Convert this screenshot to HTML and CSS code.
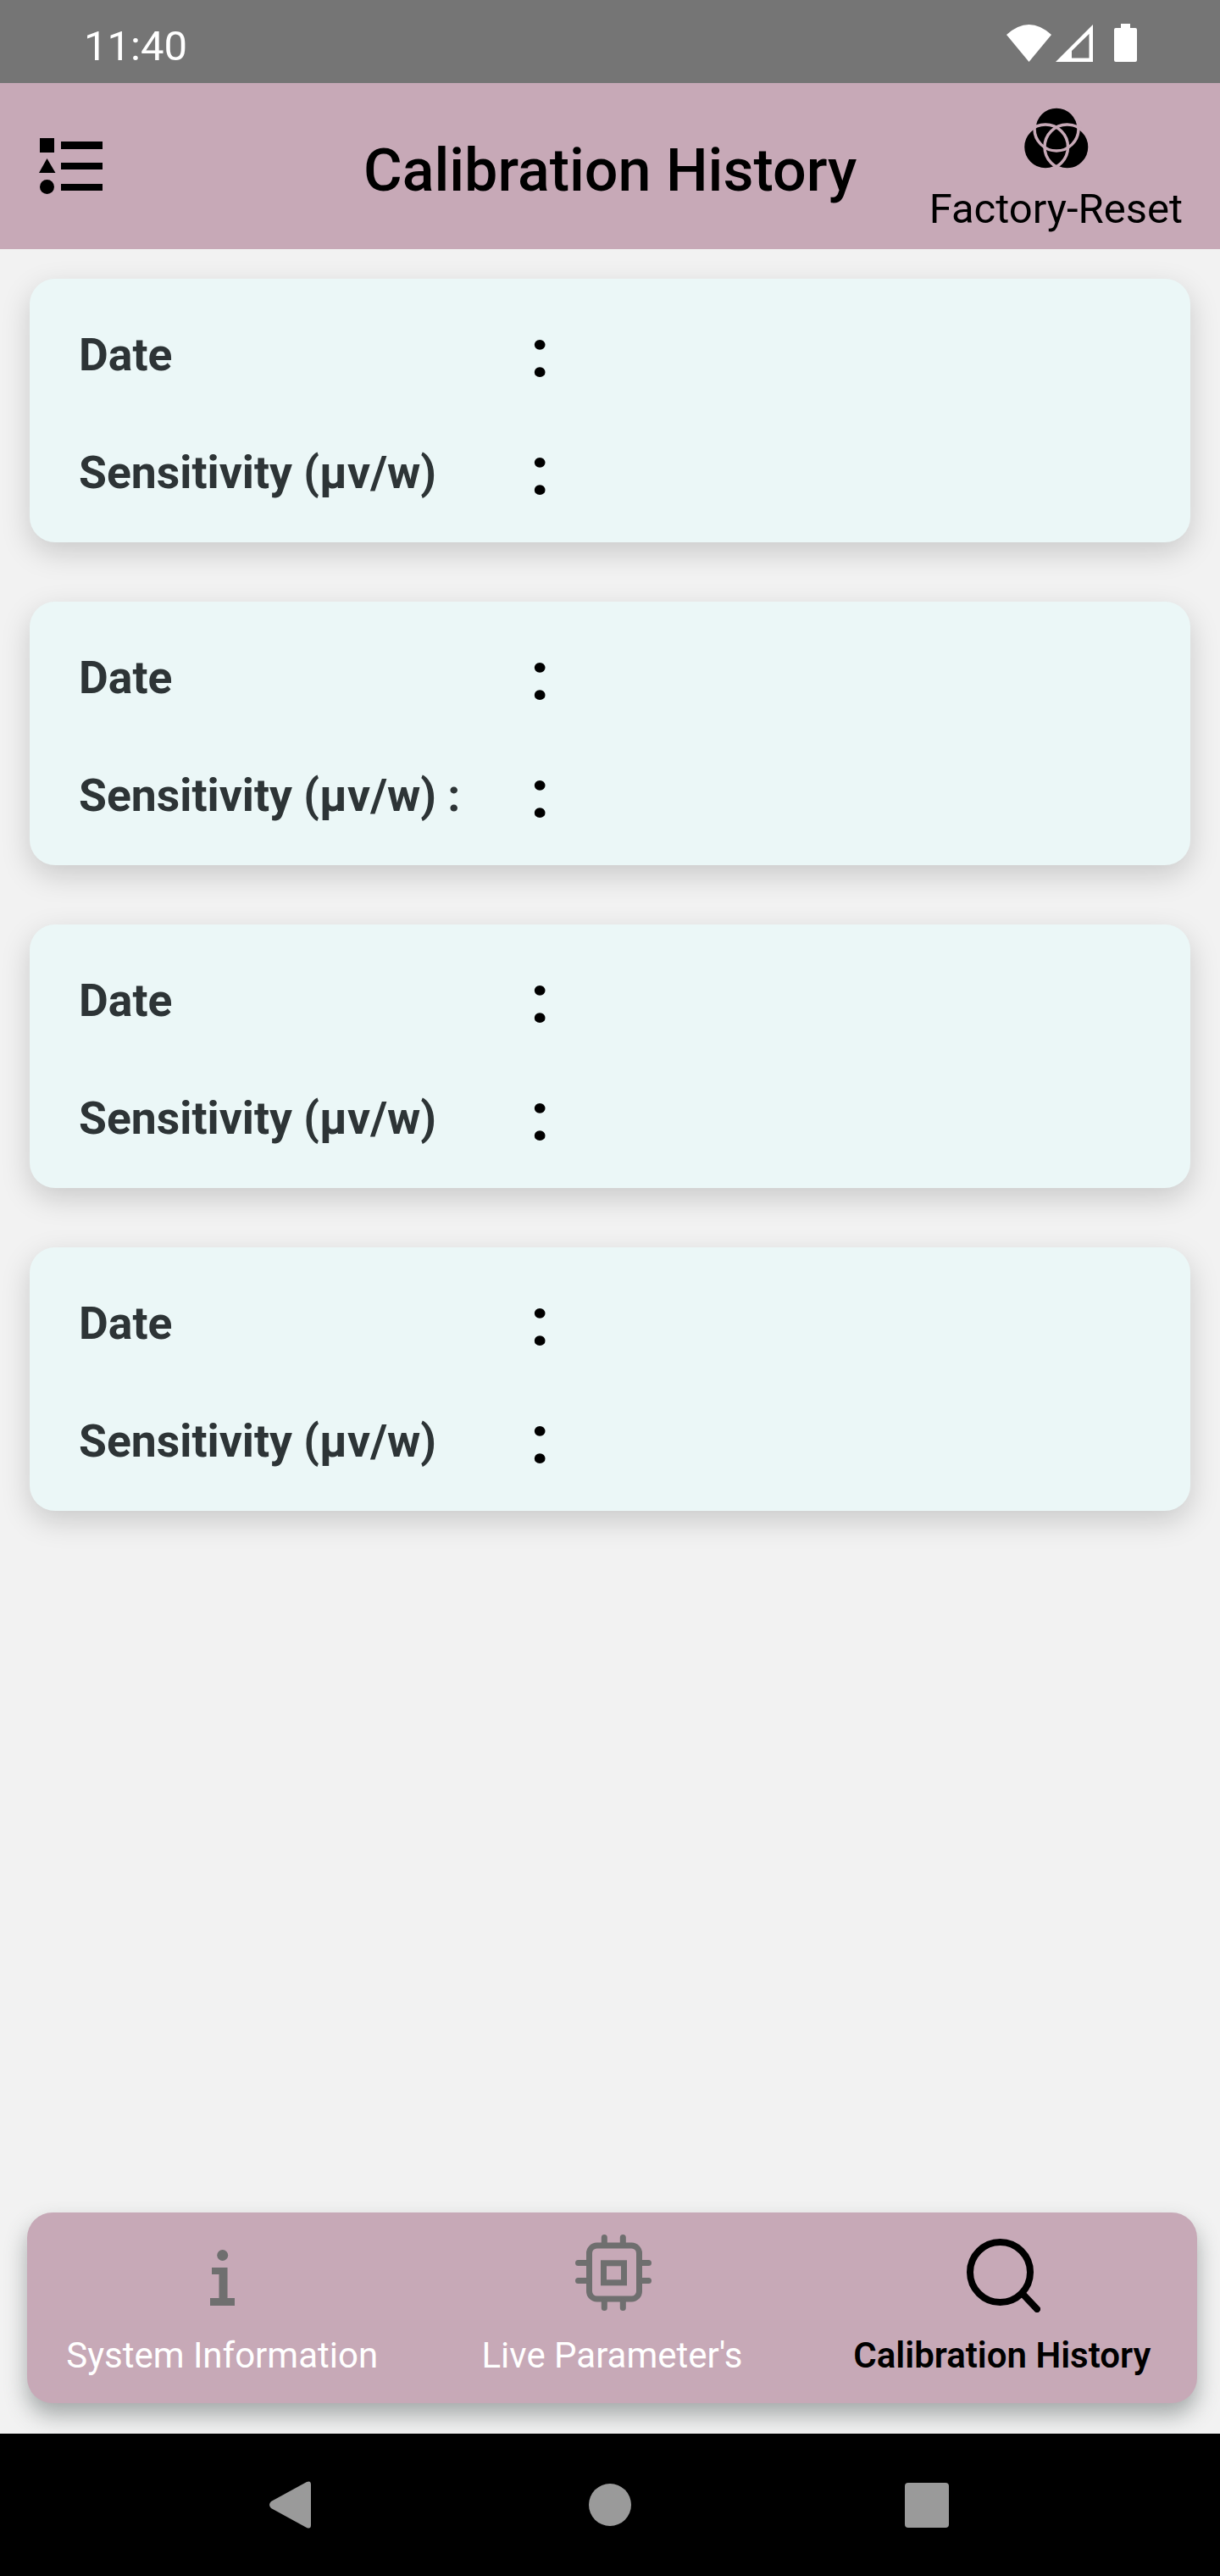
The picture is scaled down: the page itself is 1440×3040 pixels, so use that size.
FILE: index.html
```html
<!DOCTYPE html>
<html lang="en">
<head>
<meta charset="utf-8">
<title>Calibration History</title>
<link rel="stylesheet" href="styles.css">
</head>
<body>
<div class="screen">
  <div class="status">
    <span class="clock">11:40</span>
    <div class="status-icons">
      <svg class="i-wifi" viewBox="0 0 53 44"><path d="M0 12 Q26.500 -12 53 12 L26.500 44 Z" fill="#fff"/></svg>
      <svg class="i-signal" viewBox="0 0 44 44"><path fill-rule="evenodd" d="M44 0V44H0ZM39.500 11 L19 31V39.500H39.500Z" fill="#fff"/></svg>
      <svg class="i-battery" viewBox="0 0 27 45"><path d="M8 0H19V5H25Q27 5 27 7V43Q27 45 25 45H2Q0 45 0 43V7Q0 5 2 5H8Z" fill="#fff"/></svg>
    </div>
  </div>
  <header class="bar">
    <svg class="i-list" viewBox="0 0 76 66"><path d="M2 0H19V17H2ZM27 4H76V13H27ZM27 29H76V37H27ZM27 54H76V62H27ZM10.500 24L20.500 41H1Z"/><circle cx="10.500" cy="57.500" r="8.500"/></svg>
    <h1 class="title">Calibration History</h1>
    <div class="reset">
      <svg class="i-filter" viewBox="12 6.500 77 72"><circle cx="51" cy="31.500" r="26"/><circle cx="38" cy="53" r="26.500"/><circle cx="63.500" cy="53" r="26.500"/><g fill="none" stroke="#c7a9b7" stroke-width="3.500"><circle cx="51" cy="31.500" r="26"/><circle cx="38" cy="53" r="26.500"/><circle cx="63.500" cy="53" r="26.500"/></g></svg>
      <span class="reset-label">Factory-Reset</span>
    </div>
  </header>
  <main class="list">
    <section class="card">
      <div class="row"><span class="name">Date</span><span class="colon">:</span></div>
      <div class="row"><span class="name">Sensitivity (µv/w)</span><span class="colon">:</span></div>
    </section>
    <section class="card">
      <div class="row"><span class="name">Date</span><span class="colon">:</span></div>
      <div class="row"><span class="name">Sensitivity (µv/w) :</span><span class="colon">:</span></div>
    </section>
    <section class="card">
      <div class="row"><span class="name">Date</span><span class="colon">:</span></div>
      <div class="row"><span class="name">Sensitivity (µv/w)</span><span class="colon">:</span></div>
    </section>
    <section class="card">
      <div class="row"><span class="name">Date</span><span class="colon">:</span></div>
      <div class="row"><span class="name">Sensitivity (µv/w)</span><span class="colon">:</span></div>
    </section>
  </main>
  <nav class="tabs">
    <div class="tab">
      <div class="tab-icon"><svg class="i-info" viewBox="0 0 29 66"><circle cx="14.700" cy="6.500" r="6.500" fill="#6f6f6f"/><path d="M2 21H20.500V57H29V66H0V57H10.500V29H2Z" fill="#6f6f6f"/></svg></div>
      <span class="tab-label">System Information</span>
    </div>
    <div class="tab">
      <div class="tab-icon"><svg class="i-chip" viewBox="0 0 90 90" fill="none" stroke="#6f6f6f"><rect x="16.500" y="13" width="59" height="63" rx="9" stroke-width="7"/><rect x="33.500" y="33.800" width="24" height="23" stroke-width="7"/><path d="M34.300 3.500V10M56.300 3.500V10M34.300 79V86.500M56.300 79V86.500M3.500 33.500H13M3.500 54.500H13M79 33.500H86.500M79 54.500H86.500" stroke-width="7" stroke-linecap="round"/></svg></div>
      <span class="tab-label">Live Parameter's</span>
    </div>
    <div class="tab">
      <div class="tab-icon"><svg class="i-search" viewBox="0 0 87 87" fill="none" stroke="#000" stroke-width="8"><circle cx="39.500" cy="39.500" r="35.500"/><path d="M66 65L83 83" stroke-linecap="round"/></svg></div>
      <span class="tab-label active">Calibration History</span>
    </div>
  </nav>
  <div class="sysnav">
    <svg class="i-back" viewBox="0 0 49 56"><path d="M2 24L44 1Q49 -1 49 4V52Q49 57 44 55L2 32Q-2 28 2 24Z" fill="#9a9a9a"/></svg>
    <span class="i-home"></span>
    <span class="i-recent"></span>
  </div>
</div>
</body>
</html>
```
FILE: styles.css
```css
* { box-sizing: border-box; }
html, body { margin: 0; padding: 0; }
body { font-family: Roboto, "Liberation Sans", sans-serif; background: #f2f2f2; }
.screen { width: 1440px; height: 3040px; display: flex; flex-direction: column; background: #f2f2f2; overflow: hidden; }

.status { height: 98px; flex: none; background: #757575; display: flex; align-items: center; justify-content: space-between; padding: 3px 98px 0 99px; }
.clock { color: #fff; font-size: 49px; line-height: 1; margin-top: 7px; }
.status-icons { display: flex; align-items: center; gap: 5px; }
.i-wifi { width: 53px; height: 44px; display: block; }
.i-signal { width: 44px; height: 44px; display: block; }
.i-battery { width: 27px; height: 45px; display: block; margin-left: 20px; }

.bar { height: 196px; flex: none; background: #c7a9b7; display: flex; align-items: center; position: relative; padding: 0 44px 0 45px; }
.i-list { width: 76px; height: 66px; display: block; }
.title { margin: 10px 0 0 308px; font-size: 70px; font-weight: 500; color: #000; white-space: nowrap; }
.reset { margin-left: auto; margin-top: 10px; display: flex; flex-direction: column; align-items: center; gap: 20px; }
.i-filter { width: 77px; height: 72px; display: block; }
.reset-label { font-size: 49px; line-height: 56px; color: #000; }

.list { flex: 1; display: flex; flex-direction: column; gap: 70px; padding: 35px 35px 0; }
.card { height: 311px; background: #ebf7f7; border-radius: 30px; box-shadow: 0 12px 34px rgba(0,0,0,.17); padding: 44px 58px 0; display: flex; flex-direction: column; gap: 49px; }
.row { display: flex; align-items: center; height: 90px; }
.name { width: 533px; font-size: 53.500px; font-weight: 700; color: #2d3436; white-space: nowrap; }
.colon { font-size: 80px; font-weight: 700; color: #000; line-height: 1; }

.tabs { flex: none; height: 225px; margin: 0 27px 36px 32px; background: #c7a9b7; border-radius: 30px; box-shadow: 0 14px 26px rgba(60,70,70,.42); display: grid; grid-template-columns: repeat(3, 1fr); }
.tab { display: flex; flex-direction: column; align-items: center; }
.tab-icon { height: 144px; display: flex; align-items: flex-start; justify-content: center; }
.i-info { width: 29px; height: 66px; display: block; margin-top: 44px; }
.i-chip { width: 90px; height: 90px; display: block; margin: 26px 0 0 3px; }
.i-search { width: 87px; height: 87px; display: block; margin: 31px 0 0 4px; }
.tab-label { font-size: 42px; line-height: 50px; color: #fff; white-space: nowrap; }
.tab-label.active { font-weight: 600; color: #000; }

.sysnav { flex: none; height: 168px; background: #000; display: flex; align-items: center; }
.i-back { width: 49px; height: 56px; display: block; margin-left: 318px; }
.i-home { width: 50px; height: 50px; border-radius: 50%; background: #9a9a9a; margin-left: 328px; }
.i-recent { width: 52px; height: 53px; border-radius: 4px; background: #9a9a9a; margin-left: 323px; }
```
